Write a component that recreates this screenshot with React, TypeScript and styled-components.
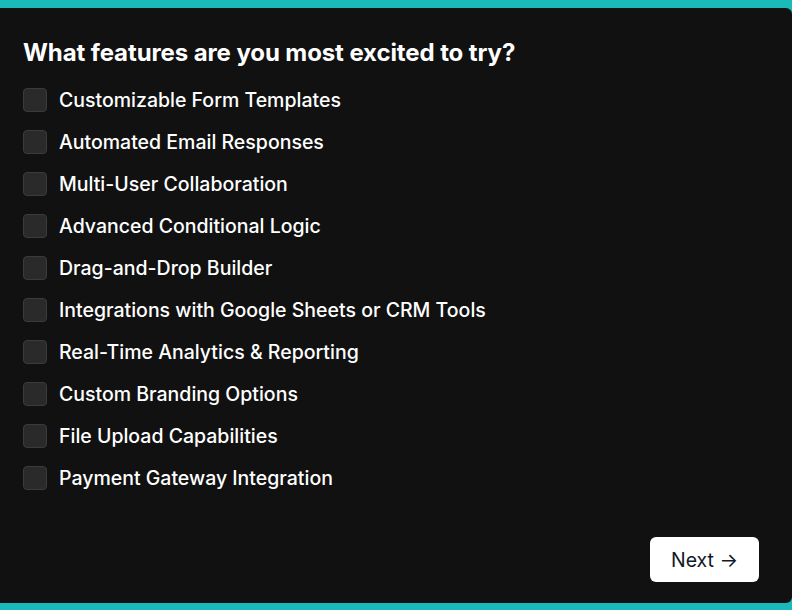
import styled, { createGlobalStyle } from "styled-components"

const GlobalStyle = createGlobalStyle`
    html, body {
        margin: 0;
        padding: 0;
        background: #1bbaba;
    }
    body {
        font-family: Inter, "Noto Sans", sans-serif;
    }
`

const Page = styled.div`
    height: 610px;
    padding-top: 8px;
    box-sizing: border-box;
`

const Card = styled.form`
    height: 595px;
    background: #111111;
    border-radius: 0 6px 6px 0;
    padding: 31px 33px 21px 23px;
    box-sizing: border-box;
    display: flex;
    flex-direction: column;
`

const Title = styled.h2`
    margin: 0 0 21px;
    color: #ffffff;
    font-size: 24px;
    font-weight: 700;
    line-height: 28px;
    letter-spacing: -0.1px;
`

const List = styled.div`
    display: flex;
    flex-direction: column;
    gap: 18px;
`

const Option = styled.label`
    display: flex;
    align-items: center;
    gap: 12px;
    color: #ffffff;
    font-size: 19.5px;
    font-weight: 500;
    line-height: 24px;
    cursor: pointer;
`

const Box = styled.input.attrs({ type: "checkbox" })`
    appearance: none;
    margin: 0;
    width: 24px;
    height: 24px;
    border-radius: 4px;
    background: #2a2a2a;
    border: 1px solid #3b3b3b;
    box-sizing: border-box;
`

const Footer = styled.div`
    margin-top: auto;
    display: flex;
    justify-content: flex-end;
`

const NextButton = styled.button`
    width: 109px;
    height: 45px;
    background: #ffffff;
    border: none;
    border-radius: 6px;
    color: #111827;
    font-family: inherit;
    font-size: 19.5px;
    font-weight: 400;
    cursor: pointer;
`

const opcoes = [
    "Customizable Form Templates",
    "Automated Email Responses",
    "Multi-User Collaboration",
    "Advanced Conditional Logic",
    "Drag-and-Drop Builder",
    "Integrations with Google Sheets or CRM Tools",
    "Real-Time Analytics & Reporting",
    "Custom Branding Options",
    "File Upload Capabilities",
    "Payment Gateway Integration",
]

function App() {
    return (
        <Page>
            <GlobalStyle />
            <Card onSubmit={(e) => e.preventDefault()}>
                <Title>What features are you most excited to try?</Title>
                <List>
                    {opcoes.map((opcao) => (
                        <Option key={opcao}>
                            <Box />
                            {opcao}
                        </Option>
                    ))}
                </List>
                <Footer>
                    <NextButton type="submit">Next →</NextButton>
                </Footer>
            </Card>
        </Page>
    )
}

export default App
